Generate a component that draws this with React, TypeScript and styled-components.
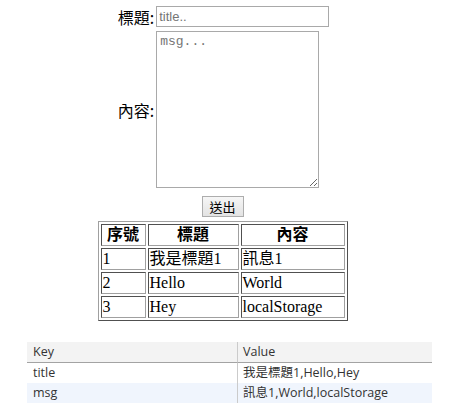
import React from 'react';
import styled, { createGlobalStyle } from 'styled-components';

const GlobalStyle = createGlobalStyle`
  html, body {
    margin: 0;
    background: #fff;
  }
  body {
    font-family: 'Liberation Serif', 'Noto Sans CJK TC', serif;
    color: #000;
  }
`;

const Page = styled.div`
  width: 445px;
  display: flex;
  flex-direction: column;
  align-items: center;
  padding-top: 6px;
`;

const Form = styled.div`
  display: grid;
  grid-template-columns: auto auto;
  column-gap: 2px;
  row-gap: 4px;
  margin-left: 2px;
`;

const Label = styled.label`
  justify-self: end;
  align-self: center;
  font-family: 'Noto Sans CJK TC', sans-serif;
  font-size: 16px;
  line-height: 20px;
`;

const TitleInput = styled.input`
  box-sizing: border-box;
  width: 173px;
  height: 21px;
  margin: 0;
  padding: 1px 2px;
  border: 1px solid #a9a9a9;
  border-radius: 0;
  font-family: 'Liberation Sans', 'Noto Sans CJK TC', sans-serif;
  font-size: 13px;
  outline: none;
  &::placeholder {
    color: #757575;
  }
`;

const MsgArea = styled.textarea`
  box-sizing: border-box;
  width: 163px;
  height: 157px;
  margin: 0;
  padding: 2px 3px;
  border: 1px solid #a9a9a9;
  border-radius: 0;
  font-family: 'Liberation Mono', monospace;
  font-size: 13px;
  outline: none;
  &::placeholder {
    color: #757575;
  }
`;

const SubmitButton = styled.button`
  box-sizing: border-box;
  width: 42px;
  height: 21px;
  margin-top: 8px;
  padding: 0;
  border: 1px solid #adadad;
  border-radius: 0;
  background: linear-gradient(#f6f6f6, #e3e3e3);
  font-family: 'Noto Sans CJK TC', sans-serif;
  font-size: 13px;
  line-height: 19px;
  color: #000;
`;

const Table = styled.table`
  margin-top: 4px;
  border-collapse: separate;
  border-spacing: 2px;
  border: 1px solid;
  border-color: #a0a0a0 #505050 #505050 #a0a0a0;
  table-layout: fixed;
  font-size: 16px;
`;

const Th = styled.th<{ $w: number }>`
  box-sizing: border-box;
  width: ${(p) => p.$w}px;
  height: 22px;
  padding: 0 1px;
  border: 1px solid;
  border-color: #505050 #a0a0a0 #a0a0a0 #505050;
  font-weight: bold;
  text-align: center;
  line-height: 18px;
`;

const Td = styled.td`
  box-sizing: border-box;
  height: 22px;
  padding: 0 1px;
  border: 1px solid;
  border-color: #505050 #a0a0a0 #a0a0a0 #505050;
  line-height: 18px;
  white-space: nowrap;
`;

const Storage = styled.div`
  margin: 21px 0 0 27px;
  width: 405px;
  display: grid;
  grid-template-columns: 210px 1fr;
  font-family: 'Open Sans', 'Noto Sans CJK TC', sans-serif;
  font-size: 12.5px;
  color: #333;
`;

const HeadCell = styled.div<{ $first?: boolean }>`
  height: 20px;
  line-height: 20px;
  padding-left: ${(p) => (p.$first ? 6 : 5)}px;
  background: #f3f3f3;
  border-bottom: 1px solid #a3a3a3;
  border-left: ${(p) => (p.$first ? 'none' : '1px solid #cbcbcb')};
`;

const Cell = styled.div<{ $first?: boolean; $alt?: boolean }>`
  height: 20px;
  line-height: 20px;
  padding-left: ${(p) => (p.$first ? 6 : 5)}px;
  background: ${(p) => (p.$alt ? '#f0f5fd' : '#fff')};
  border-left: ${(p) => (p.$first ? 'none' : '1px solid #cbcbcb')};
  white-space: nowrap;
`;

const rows = [
  { id: 1, title: '我是標題1', msg: '訊息1' },
  { id: 2, title: 'Hello', msg: 'World' },
  { id: 3, title: 'Hey', msg: 'localStorage' },
];

const App: React.FC = () => {
  const titles = rows.map((r) => r.title).join(',');
  const msgs = rows.map((r) => r.msg).join(',');

  return (
    <>
      <GlobalStyle />
      <Page>
        <Form>
          <Label>標題:</Label>
          <TitleInput placeholder="title.." />
          <Label>內容:</Label>
          <MsgArea placeholder="msg..." />
        </Form>
        <SubmitButton>送出</SubmitButton>
        <Table>
          <thead>
            <tr>
              <Th $w={45}>序號</Th>
              <Th $w={91}>標題</Th>
              <Th $w={104}>內容</Th>
            </tr>
          </thead>
          <tbody>
            {rows.map((r) => (
              <tr key={r.id}>
                <Td>{r.id}</Td>
                <Td>{r.title}</Td>
                <Td>{r.msg}</Td>
              </tr>
            ))}
          </tbody>
        </Table>
      </Page>
      <Storage>
        <HeadCell $first>Key</HeadCell>
        <HeadCell>Value</HeadCell>
        <Cell $first>title</Cell>
        <Cell>{titles}</Cell>
        <Cell $first $alt>msg</Cell>
        <Cell $alt>{msgs}</Cell>
      </Storage>
    </>
  );
};

export default App;
